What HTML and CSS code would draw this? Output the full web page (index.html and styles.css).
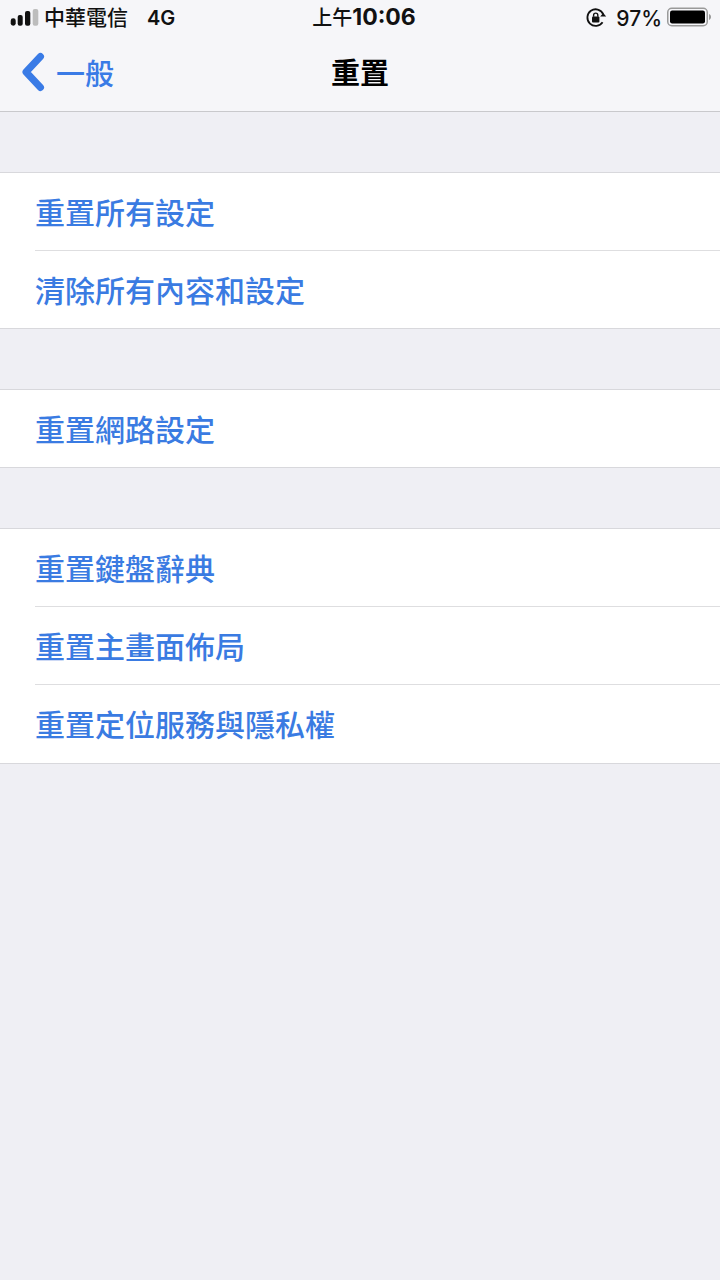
FILE: index.html
```html
<!DOCTYPE html>
<html lang="zh-Hant">
  <head>
    <meta charset="UTF-8" />
    <title>重置</title>
    <link rel="stylesheet" href="styles.css">
  </head>
  <body>
    <header class="top-bar">
      <div class="status-bar">
        <div class="status-left">
          <svg class="signal" width="29" height="18" viewBox="0 0 29 18">
            <rect x="0.700" y="9.300" width="5" height="7.400" rx="2.400" fill="#111"/>
            <rect x="7.700" y="6" width="5" height="10.700" rx="2" fill="#111"/>
            <rect x="15" y="2" width="5.300" height="14.700" rx="2" fill="#111"/>
            <rect x="22.700" y="0" width="5.600" height="16.700" rx="2" fill="#bdbdbd"/>
          </svg>
          <span class="carrier">中華電信</span>
          <span class="network">4G</span>
        </div>
        <div class="status-time"><span class="time-prefix">上午</span>10:06</div>
        <div class="status-right">
          <svg class="rotation-lock" width="22" height="22" viewBox="0 0 22 22">
            <path d="M17.600 15.200A8.300 8.300 0 1 1 18.200 7" fill="none" stroke="#111" stroke-width="1.800"/>
            <path d="M15.200 9.600h6l-3-3.600z" fill="#111"/>
            <rect x="7" y="9.600" width="7.400" height="5.800" rx="1" fill="#111"/>
            <path d="M8.600 9.800V8.200a2.100 2.100 0 0 1 4.200 0v1.600" fill="none" stroke="#111" stroke-width="1.400"/>
          </svg>
          <span class="battery-pct">97%</span>
          <svg class="battery" width="44" height="20" viewBox="0 0 44 20">
            <rect x="0.750" y="1.250" width="39.500" height="17.500" rx="4" fill="none" stroke="#9a9a9a" stroke-width="1.500"/>
            <rect x="3" y="3.500" width="35" height="13" rx="2.200" fill="#000"/>
            <path d="M42 7v6c1.200-.4 2-1.600 2-3s-.8-2.600-2-3z" fill="#9a9a9a"/>
          </svg>
        </div>
      </div>
      <nav class="nav-bar">
        <a class="back-link">
          <svg class="back-chevron" width="26" height="40" viewBox="0 0 26 40">
            <path d="M20.500 4.500 L6 20 L20.500 35.500" fill="none" stroke="#3a7be6" stroke-width="7" stroke-linecap="round" stroke-linejoin="round"/>
          </svg>
          <span>一般</span>
        </a>
        <h1 class="nav-title">重置</h1>
      </nav>
    </header>

    <main class="settings">
      <ul class="group">
        <li class="row">重置所有設定</li>
        <li class="row">清除所有內容和設定</li>
      </ul>
      <ul class="group">
        <li class="row">重置網路設定</li>
      </ul>
      <ul class="group">
        <li class="row">重置鍵盤辭典</li>
        <li class="row">重置主畫面佈局</li>
        <li class="row row-tall">重置定位服務與隱私權</li>
      </ul>
    </main>
  </body>
</html>
```

FILE: styles.css
```css
html, body {
  margin: 0;
  padding: 0;
}
body {
  width: 720px;
  height: 1280px;
  overflow: hidden;
  background: #efeff4;
  font-family: "Noto Sans CJK TC", "Liberation Sans", sans-serif;
}
.top-bar {
  height: 111px;
  background: #f6f6f9;
  border-bottom: 1px solid #c9c9cc;
}
.status-bar {
  height: 34px;
  display: grid;
  grid-template-columns: 1fr auto 1fr;
  align-items: center;
  color: #111;
  font-size: 21px;
}
.status-left {
  display: flex;
  align-items: center;
  padding-left: 10px;
}
.signal {
  margin-top: 2px;
}
.carrier {
  margin: -2px 0 0 5px;
  line-height: 34px;
  font-weight: 500;
}
.network {
  margin: 2px 0 0 19px;
  font-family: "Inter", "Liberation Sans", sans-serif;
  font-size: 20px;
  font-weight: 600;
}
.status-time {
  margin-left: 8px;
  font-family: "Inter", "Liberation Sans", sans-serif;
  font-size: 23px;
  font-weight: 700;
  line-height: 34px;
}
.time-prefix {
  font-family: "Noto Sans CJK TC", sans-serif;
  font-size: 20px;
  font-weight: 500;
}
.status-right {
  display: flex;
  align-items: center;
  justify-content: flex-end;
  padding-right: 9px;
  font-family: "Inter", "Liberation Sans", sans-serif;
  font-size: 21px;
  font-weight: 500;
}
.rotation-lock {
  margin-top: 2px;
}
.battery-pct {
  margin: 2px 0 0 9px;
}
.battery {
  margin-left: 5px;
}
.nav-bar {
  position: relative;
  height: 77px;
  display: flex;
  align-items: center;
  justify-content: center;
}
.back-link {
  position: absolute;
  left: 20px;
  top: 18px;
  display: flex;
  align-items: center;
  gap: 10px;
  color: #3a7be6;
  font-size: 29px;
  font-weight: 500;
  line-height: 40px;
}
.nav-title {
  margin: -4px 0 0;
  font-size: 29px;
  font-weight: 700;
  color: #000;
  line-height: 40px;
}
.settings {
  padding-top: 60px;
}
.group {
  list-style: none;
  margin: 0 0 60px;
  padding: 0 0 0 35px;
  background: #fff;
  border-top: 1px solid #d8d8dc;
  border-bottom: 1px solid #d8d8dc;
}
.row {
  height: 77px;
  line-height: 77px;
  color: #3a7be2;
  font-size: 30px;
  font-weight: 500;
  border-bottom: 1px solid #dedee0;
}
.row:last-child {
  border-bottom: 0;
}
.row-tall {
  height: 78px;
}
```
